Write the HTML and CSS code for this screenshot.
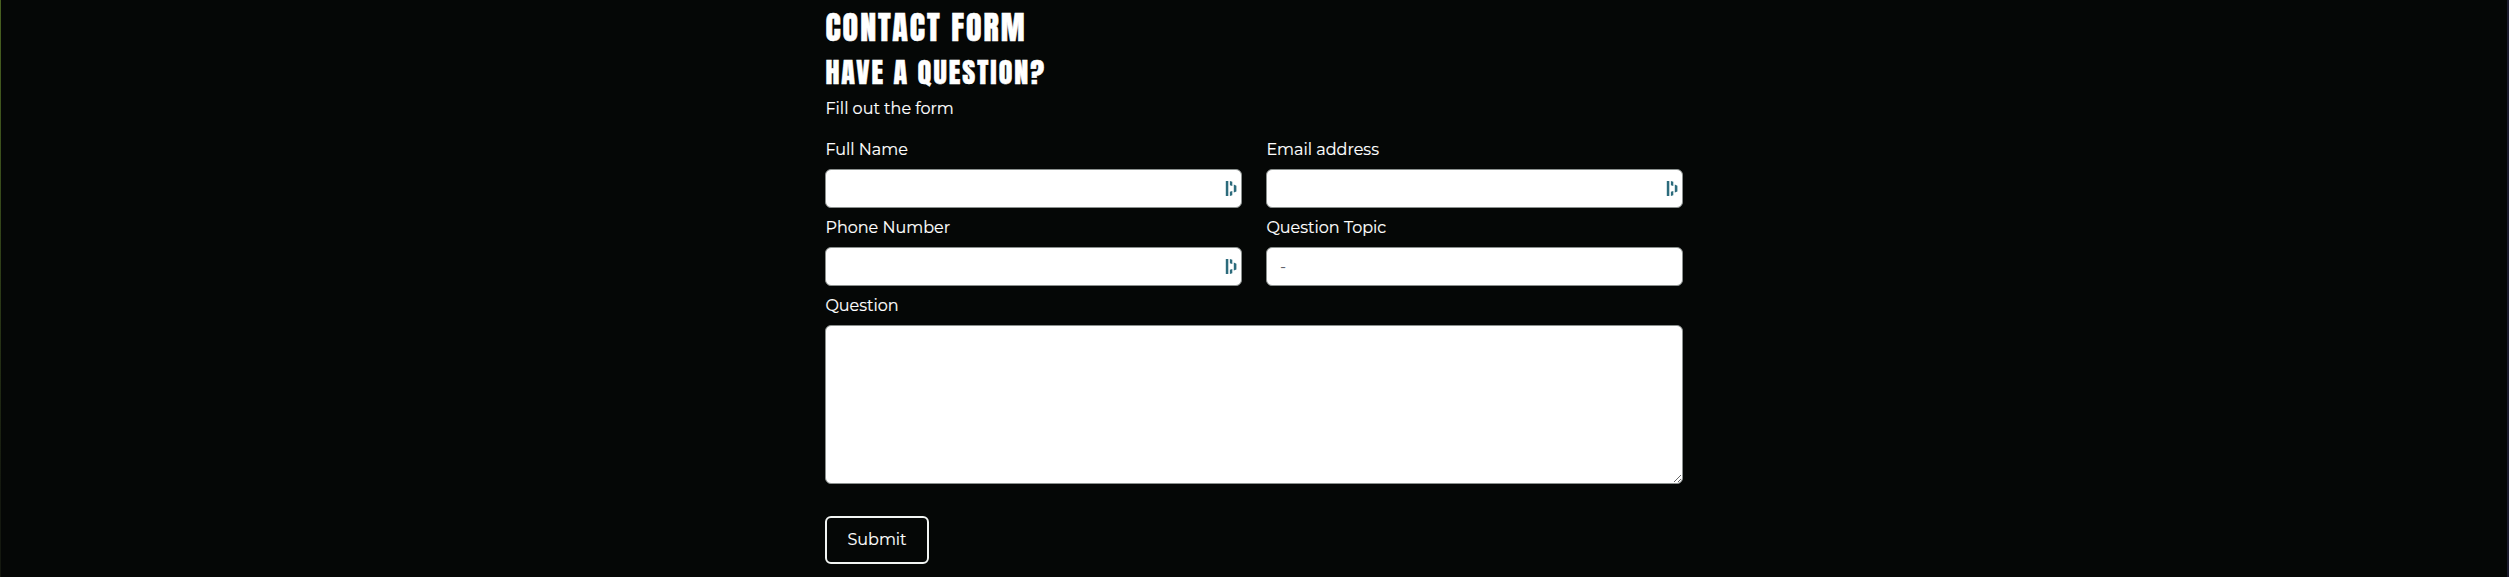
FILE: index.html
```html
<!DOCTYPE html>
<html lang="en">
<head>
<meta charset="utf-8">
<title>Contact Form</title>
<link rel="stylesheet" href="styles.css">
</head>
<body>
<main class="page">
  <div class="edge edge-left"></div>
  <form class="contact">
    <h1 class="title">CONTACT FORM</h1>
    <h2 class="subtitle">HAVE A QUESTION?</h2>
    <p class="intro">Fill out the form</p>
    <div class="grid">
      <div class="field">
        <label class="label" for="name">Full Name</label>
        <div class="control"><input class="input" id="name" type="text"><svg class="fill-icon" viewBox="0 0 12 15"><path d="M.8 0H3.3V15H.8ZM4.9 0 7.3.8V5L4.9 4.2ZM4.9 10.8 7.3 10V14.2L4.9 15ZM8.8 3.6l2.6 1.2v5.6l-2.6 1.2Z"/></svg></div>
      </div>
      <div class="field">
        <label class="label" for="email">Email address</label>
        <div class="control"><input class="input" id="email" type="text"><svg class="fill-icon" viewBox="0 0 12 15"><path d="M.8 0H3.3V15H.8ZM4.9 0 7.3.8V5L4.9 4.2ZM4.9 10.8 7.3 10V14.2L4.9 15ZM8.8 3.6l2.6 1.2v5.6l-2.6 1.2Z"/></svg></div>
      </div>
      <div class="field">
        <label class="label" for="phone">Phone Number</label>
        <div class="control"><input class="input" id="phone" type="text"><svg class="fill-icon" viewBox="0 0 12 15"><path d="M.8 0H3.3V15H.8ZM4.9 0 7.3.8V5L4.9 4.2ZM4.9 10.8 7.3 10V14.2L4.9 15ZM8.8 3.6l2.6 1.2v5.6l-2.6 1.2Z"/></svg></div>
      </div>
      <div class="field">
        <label class="label" for="topic">Question Topic</label>
        <div class="control"><select class="input" id="topic"><option>-</option></select></div>
      </div>
      <div class="field field-wide">
        <label class="label" for="question">Question</label>
        <textarea class="textarea" id="question"></textarea>
      </div>
    </div>
    <button class="submit" type="button">Submit</button>
  </form>
  <div class="edge edge-right"></div>
</main>
</body>
</html>
```
FILE: styles.css
```css
* { box-sizing: border-box; }
body {
  margin: 0;
  background: #050706;
  color: #fff;
  font-family: Montserrat, Inter, sans-serif;
}
.page {
  display: flex;
  justify-content: space-between;
  height: 577px;
  overflow: hidden;
}
.edge-left { width: 1px; background: linear-gradient(#486020, #3a4e1c 30%, #14180f 85%, #14180f); }
.edge-right { width: 2px; background: #1c1c2e; }
.contact { width: 858px; }
.title, .subtitle {
  margin: 0;
  color: #fff;
  font-family: Anton, Roboto, sans-serif;
  font-weight: 400;
  white-space: nowrap;
  letter-spacing: 2px;
  -webkit-text-stroke: .5px #fff;
}
.title { height: 55px; font-size: 32px; line-height: 55px; }
.subtitle { height: 36px; font-size: 28px; line-height: 34px; }
.intro {
  margin: 4px 0 0;
  height: 28px;
  font-size: 16px;
  line-height: 27px;
}
.grid { display: grid; grid-template-columns: 417px 417px; column-gap: 24px; padding-top: 7px; }
.field { height: 78px; }
.label {
  display: block;
  height: 39px;
  padding-top: 6px;
  font-size: 16px;
  line-height: 27px;
}
.control { position: relative; height: 39px; }
.input, .textarea {
  display: block;
  width: 100%;
  height: 39px;
  margin: 0;
  border: 1px solid #8b908e;
  border-radius: 6px;
  background: #fff;
  color: #62626c;
  font: 16px Montserrat, Inter, sans-serif;
  appearance: none;
  outline: 0;
}
.input { padding: 0 13px; }
.fill-icon { position: absolute; right: 5px; top: 12px; width: 12px; height: 15px; fill: #2c6b7c; }
.field-wide { grid-column: 1 / 3; height: 198px; }
.textarea { height: 159px; resize: vertical; }
.submit {
  display: block;
  width: 104px;
  height: 48px;
  margin-top: 32px;
  padding: 0 0 1px;
  border: 2px solid #f2f5f3;
  border-radius: 6px;
  background: transparent;
  color: #fff;
  font: 16px Montserrat, Inter, sans-serif;
}
.intro, .label, .submit { -webkit-text-stroke: .15px #fff; }
.title, .subtitle, .intro, .label { padding-left: .4px; }
```
